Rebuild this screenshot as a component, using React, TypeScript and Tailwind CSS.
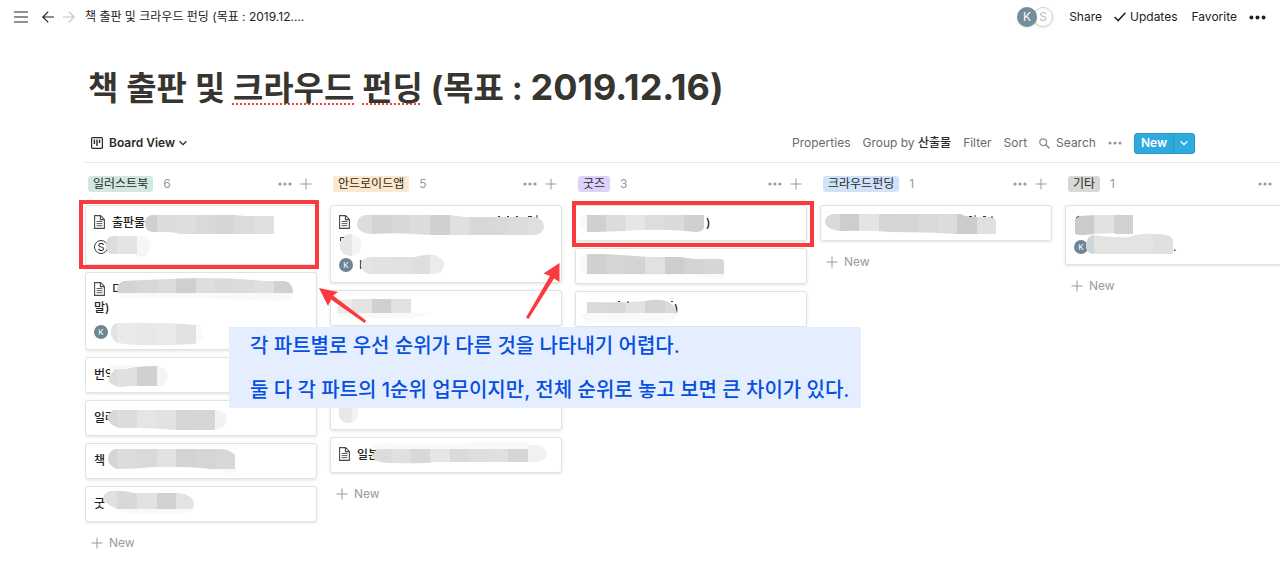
import { useId } from "react";
import type { ReactNode } from "react";

interface Smudge {
  d: string;
  // start x and fill of each tile, a tile runs until the next one
  tiles: [number, string][];
  halo?: string;
  // bits of lettering that stick out from under the smudge
  marks?: string;
}

interface BoardCard {
  title: string;
  titleClass?: string;
  page?: boolean;
  person?: "K" | "S";
  personLabel?: string;
  smudges: Smudge[];
}

interface BoardColumn {
  name: string;
  count: number;
  tag: string;
  cards: BoardCard[];
  hideNew?: boolean;
}

const columns: BoardColumn[] = [
  {
    name: "일러스트북",
    count: 6,
    tag: "bg-[#d0e8df]",
    cards: [
      {
        title: "출판물",
        page: true,
        person: "S",
        smudges: [
          {
            d: "M68 10H150L160 11H189V29H95Q90 27 80 27H68Q60 26 60 19Q60 10 68 10Z",
            tiles: [[60, "#d0d0ce"], [72, "#dcdcda"], [91, "#dededd"], [111, "#d9d9d8"], [130, "#d6d6d5"], [149, "#dcdcdb"], [169, "#dfdfde"]],
          },
          {
            d: "M28 31H50Q66 31 65 42Q64 52 55 52L50 49H28Q21 49 21 40Q21 31 28 31Z",
            tiles: [[21, "#dcdcdb"], [32, "#e4e4e3"], [52, "#f6f6f6"]],
          },
        ],
      },
      {
        title: "디\n말)",
        page: true,
        person: "K",
        smudges: [
          {
            d: "M38 9Q80 7 115 6Q150 6 180 9L200 9Q208 11 208 21H33Q30 14 38 9Z",
            tiles: [[31, "#d3d3d1"], [52, "#d7d7d6"], [72, "#dbdbda"], [91, "#cfcfce"], [111, "#dededd"], [130, "#dadada"], [149, "#dcdcdb"], [169, "#dfdfde"], [189, "#d0d0cf"]],
            halo: "M32 21H208Q206 29 195 29Q150 27 100 26H50Q36 27 32 21Z",
          },
          {
            d: "M32 51Q80 50 111 53H114Q120 58 118 66Q114 72 108 72Q60 75 32 71Q26 66 26 61Q26 52 32 51Z",
            tiles: [[26, "#dfe3e6"], [32, "#eaeaea"], [52, "#e8e8e7"], [72, "#eaeae9"], [91, "#e2e2e1"], [111, "#fafafa"]],
          },
        ],
      },
      {
        title: "번역",
        smudges: [
          {
            d: "M30 12Q40 13 50 10Q60 9 72 9Q83 11 83 19Q82 29 72 29H45L35 30Q22 28 24 20Z",
            tiles: [[22, "#dcdcdb"], [32, "#e0e0df"], [52, "#d0d0cf"], [72, "#f3f3f2"]],
            halo: "M25 8H50V20H25Z",
          },
        ],
      },
      {
        title: "일러",
        smudges: [
          {
            d: "M28 10H132Q142 12 142 20Q140 29 128 30H90Q70 28 50 28H34Q22 24 22 16Z",
            tiles: [[22, "#d8d8d7"], [32, "#dcdcdb"], [52, "#e5e5e4"], [72, "#e2e2e1"], [91, "#d5d5d4"], [111, "#d6d6d5"], [130, "#f2f2f2"]],
          },
        ],
      },
      {
        title: "책",
        smudges: [
          {
            d: "M30 6H138Q145 7 150 12V26H125Q100 23 70 24Q50 26 32 26Q22 22 23 15Q24 8 30 6Z",
            tiles: [[22, "#d5d5d4"], [32, "#dcdcdb"], [52, "#d9d9d8"], [72, "#e2e2e1"], [91, "#d3d3d2"], [111, "#d5d5d4"], [130, "#d8d8d7"]],
            halo: "M128 26H153Q150 31 142 30Z",
          },
        ],
      },
      {
        title: "굿",
        smudges: [
          {
            d: "M26 5Q36 4 50 7H95Q108 9 109 18L108 23H32Q20 18 18 12Q20 5 26 5Z",
            tiles: [[18, "#e0e0df"], [32, "#d8d8d7"], [52, "#e2e2e1"], [72, "#d1d1d0"], [91, "#e3e3e2"]],
            halo: "M25 22H108Q105 28 90 28H50Z",
          },
        ],
      },
    ],
  },
  {
    name: "안드로이드앱",
    count: 5,
    tag: "bg-[#fbe8cd]",
    cards: [
      {
        title: " \n ",
        page: true,
        person: "K",
        personLabel: "I",
        smudges: [
          {
            d: "M36 10H120L135 12H205Q214 14 214 22Q213 29 205 30H100Q70 27 40 29Q27 27 27 19Q27 11 36 10Z",
            tiles: [[27, "#dddddc"], [42, "#d3d3d2"], [62, "#d8d8d7"], [80, "#dcdcdb"], [100, "#d0d0cf"], [120, "#e0e0df"], [139, "#d8d8d7"], [159, "#d9d9d8"], [178, "#dcdcdb"], [198, "#dfdfde"]],
            marks: "M168 11.5H170M177 11.5H179M186 11.5H188M198 11.5H202M207 10V13",
          },
          {
            d: "M21 29A11 11 0 1 1 20 29Z",
            tiles: [[9, "#e6e6e5"], [22, "#f4f4f4"]],
            marks: "M10.5 36V32.500H14",
          },
          {
            d: "M40 52H85Q95 49 105 50Q115 54 114 61Q112 69 104 69H40Q31 67 31 60Q31 53 40 52Z",
            tiles: [[31, "#e4e4e3"], [42, "#e2e2e1"], [62, "#e1e1e0"], [82, "#dededd"], [100, "#ebebea"]],
          },
        ],
      },
      {
        title: " ",
        smudges: [
          {
            d: "M9 10L22 9H81V23H7Z",
            tiles: [[7, "#ebebea"], [22, "#e3e3e2"], [42, "#d0d0cf"], [61, "#e1e1e0"]],
            halo: "M7 23H102Q92 28 70 28H15Q8 27 7 23Z",
          },
        ],
      },
      { title: " ", smudges: [] },
      {
        title: " \n ",
        smudges: [{ d: "M19 27A10 10 0 1 1 18 27Z", tiles: [[8, "#e8e8e7"], [22, "#f2f2f2"]] }],
      },
      {
        title: "일본",
        page: true,
        smudges: [
          {
            d: "M47 12H198V8H207Q217 10 217 17Q215 24 207 25H105Q95 27 60 26Q42 25 42 18Z",
            tiles: [[42, "#dcdcdb"], [62, "#e0e0df"], [81, "#d8d8d7"], [100, "#e6e6e5"], [120, "#dadad9"], [139, "#dededd"], [159, "#e0e0df"], [178, "#d6d6d5"], [198, "#f1f1f1"]],
            halo: "M50 6Q120 8 150 5H198V13H42Q42 7 50 6Z",
          },
        ],
      },
    ],
  },
  {
    name: "굿즈",
    count: 3,
    tag: "bg-[#dfd2fa]",
    hideNew: true,
    cards: [
      {
        title: ")",
        titleClass: "pl-[122px]",
        smudges: [
          {
            d: "M12 10H129V23Q127 27 120 27Q90 23 50 26L18 27H12Z",
            tiles: [[12, "#d0d0cf"], [31, "#dcdcdb"], [51, "#e6e6e5"], [70, "#dddddc"], [90, "#dadad9"], [109, "#d0d0cf"]],
            halo: "M12 9Q4 11 4 18Q5 25 12 26Z",
          },
        ],
      },
      {
        title: " ",
        smudges: [
          {
            d: "M12 6H30L75 9H105L120 11H147L149 13V26H12Z",
            tiles: [[12, "#d0d0cf"], [31, "#d5d5d4"], [51, "#d3d3d2"], [70, "#e1e1e0"], [90, "#cdcdcc"], [109, "#d3d3d2"], [129, "#d6d6d5"]],
            halo: "M12 5Q4 8 4 15Q5 25 12 26H149V31Q130 30 120 27H12Z",
          },
        ],
      },
      {
        title: ")",
        titleClass: "pl-[90px]",
        smudges: [
          {
            d: "M12 11Q50 12 70 10Q85 7 94 11Q101 15 102 22H12Z",
            tiles: [[12, "#dadad9"], [31, "#d8d8d7"], [51, "#e2e2e1"], [70, "#d3d3d2"], [90, "#dadad9"]],
            halo: "M5 22H103Q100 31 88 31H20Q6 31 5 22Z",
            marks: "M43 10.5H45M53 10V12M96 10.5H98",
          },
        ],
      },
    ],
  },
  {
    name: "크라우드펀딩",
    count: 1,
    tag: "bg-[#d0e3fa]",
    cards: [
      {
        title: " ",
        smudges: [
          {
            d: "M14 9H140Q146 12 155 12H170Q176 12 176 17V29H135Q110 27 70 27Q50 25 20 26Q5 24 5 16Q6 10 14 9Z",
            tiles: [[5, "#dadad9"], [20, "#cdcdcc"], [39, "#e4e4e3"], [59, "#d5d5d4"], [78, "#d6d6d5"], [98, "#d9d9d8"], [118, "#dcdcdb"], [137, "#cccccb"], [157, "#e0e0df"]],
            marks: "M149 11.5H152M155 10V12M163 11.5H166M172 11V13",
          },
        ],
      },
    ],
  },
  {
    name: "기타",
    count: 1,
    tag: "bg-[#d8d8d6]",
    cards: [
      {
        title: " ",
        person: "K",
        personLabel: ".",
        smudges: [
          {
            d: "M14 11L30 10H68V29H52L48 28L30 29Q14 31 10 29V14Z",
            tiles: [[10, "#cbcbca"], [29, "#e2e2e1"], [49, "#d1d1d0"]],
            marks: "M11 13L14 11",
          },
          {
            d: "M28 30Q50 33 65 32Q75 28 90 29Q108 29 108 36V49H28Q20 48 21 39Q22 31 28 30Z",
            tiles: [[20, "#cdd6dd"], [29, "#e3e3e2"], [68, "#e4e4e3"], [88, "#e0e0df"]],
          },
        ],
      },
    ],
  },
];

function Dots({ className }: { className: string }) {
  return (
    <svg viewBox="0 0 14 4" fill="currentColor" className={className}>
      <circle cx="2" cy="2" r="1.6" />
      <circle cx="7" cy="2" r="1.6" />
      <circle cx="12" cy="2" r="1.6" />
    </svg>
  );
}

function Plus() {
  return (
    <svg viewBox="0 0 12 12" stroke="currentColor" className="size-3 shrink-0">
      <path d="M6 0.5V11.5M0.5 6H11.5" />
    </svg>
  );
}

function Chevron({ className }: { className: string }) {
  return (
    <svg viewBox="0 0 8 6" fill="none" stroke="currentColor" strokeWidth="1.3" className={className}>
      <path d="M0.6 1.2L4 4.6L7.4 1.2" />
    </svg>
  );
}

function PageIcon() {
  return (
    <svg viewBox="0 0 11 14" fill="none" stroke="#4b4a46" className="mr-[7px] inline-block h-3.5 w-[11px] align-[-2px]">
      <path d="M0.6 0.6H6.6L10.4 4.4V13.4H0.6ZM6.4 0.8V4.6H10.2" strokeWidth="1.1" />
      <path d="M2.6 6.5H8.4M2.6 8.6H8.4M2.6 10.7H8.4" strokeWidth="0.9" />
    </svg>
  );
}

function Smudges({ items }: { items: Smudge[] }) {
  const id = useId();
  return (
    <svg aria-hidden="true" className="pointer-events-none absolute -top-px -left-px size-full overflow-visible">
      {items.map((s, i) => (
        <g key={i}>
          {s.halo && <path d={s.halo} fill="#f9f9f9" />}
          <clipPath id={`${id}-${i}`}>
            <path d={s.d} />
          </clipPath>
          <g clipPath={`url(#${id}-${i})`}>
            {s.tiles.map(([x, fill], n) => (
              <rect key={x} x={x} y="0" width={(s.tiles[n + 1]?.[0] ?? x + 24) - x} height="80" fill={fill} />
            ))}
          </g>
          {s.marks && <path d={s.marks} fill="none" stroke="#3a3936" />}
        </g>
      ))}
    </svg>
  );
}

function Card({ card }: { card: BoardCard }) {
  return (
    <article className="relative rounded-[3px] border border-[#e2e2e1] bg-white px-2 py-2 shadow-[0_1px_3px_rgba(15,15,15,0.12)]">
      <h3 className={`text-xs leading-[18px] font-medium ${card.titleClass ?? ""}`}>
        {card.page && <PageIcon />}
        {card.title.split("\n").map((line, i) => (
          <span key={i}>
            {i > 0 && <br />}
            {line.trim() || "\u00a0"}
          </span>
        ))}
      </h3>
      {card.person && (
        <div className="mt-2 mb-0.5 flex h-3.5 items-center gap-1.5">
          {card.person === "K" ? (
            <span className="flex size-3.5 items-center justify-center rounded-full bg-[#6c8694] text-[8px] text-white">K</span>
          ) : (
            <span className="flex size-3.5 items-center justify-center rounded-full border border-[#37352f] text-[11px] leading-none">S</span>
          )}
          {card.personLabel && (
            <span className={`text-xs ${card.personLabel === "." ? "pl-[79px]" : ""}`}>{card.personLabel}</span>
          )}
        </div>
      )}
      <Smudges items={card.smudges} />
    </article>
  );
}

function Column({ column }: { column: BoardColumn }) {
  return (
    <section className="w-[232px] shrink-0">
      <header className="flex h-[42px] items-center pr-[5px] pl-[3px] text-[#9b9a97]">
        <h2 className={`flex h-4 items-center rounded-[3px] px-[5px] text-xs text-[#2b2a27] ${column.tag}`}>{column.name}</h2>
        <span className="ml-2.5 text-xs">{column.count}</span>
        <button aria-label="Column options" className="ml-auto">
          <Dots className="h-1 w-3.5" />
        </button>
        <button aria-label="Add card" className="ml-2">
          <Plus />
        </button>
      </header>
      <div className="flex flex-col gap-[7px]">
        {column.cards.map((card, i) => (
          <Card key={i} card={card} />
        ))}
      </div>
      {!column.hideNew && (
        <button className="mt-3 flex h-[18px] items-center gap-1.5 pl-1.5 text-xs text-[#9b9a97]">
          <Plus />
          New
        </button>
      )}
    </section>
  );
}

function Misspelled({ children }: { children: ReactNode }) {
  return (
    <span className="underline decoration-[#e8463c] decoration-dotted decoration-2 underline-offset-[3px]">{children}</span>
  );
}

function TopBar() {
  return (
    <header className="flex h-[34px] items-center px-3.5 text-xs text-[#22211e]">
      <button aria-label="Menu">
        <svg viewBox="0 0 14 12" stroke="currentColor" strokeWidth="1.2" className="h-3 w-3.5">
          <path d="M0 1H14M0 6H14M0 11H14" />
        </svg>
      </button>
      <button aria-label="Back" className="ml-3.5">
        <svg viewBox="0 0 12 12" fill="none" stroke="currentColor" strokeWidth="1.2" className="size-3">
          <path d="M12 6H0.8M6.2 0.6L0.8 6L6.2 11.4" />
        </svg>
      </button>
      <button aria-label="Forward" className="ml-[9px] text-[#c4c4c2]">
        <svg viewBox="0 0 12 12" fill="none" stroke="currentColor" strokeWidth="1.2" className="size-3">
          <path d="M0 6H11.2M5.8 0.6L11.2 6L5.8 11.4" />
        </svg>
      </button>
      <a href="#" className="ml-2.5">책 출판 및 크라우드 펀딩 (목표 : 2019.12....</a>

      <div className="ml-auto flex items-center">
        <span className="z-10 flex size-5 items-center justify-center rounded-full bg-[#738d9b] text-xs text-white shadow-sm">K</span>
        <span className="-ml-1 flex size-5 items-center justify-center rounded-full border border-[#cfcfcd] text-xs text-[#bdbdbb] shadow-sm">S</span>
        <button className="ml-4">Share</button>
        <button className="ml-3 flex items-center gap-1">
          <svg viewBox="0 0 12 10" fill="none" stroke="currentColor" strokeWidth="1.5" className="h-2.5 w-3">
            <path d="M0.6 5L4.2 8.6L11.4 0.8" />
          </svg>
          Updates
        </button>
        <button className="ml-3.5">Favorite</button>
        <button aria-label="More" className="ml-3">
          <Dots className="h-[5px] w-[17px]" />
        </button>
      </div>
    </header>
  );
}

function Toolbar() {
  return (
    <div className="flex h-[22px] items-center pr-[85px] text-xs text-[#6b6a66]">
      <button className="flex items-center pl-1.5 font-semibold text-[#2b2a27]">
        <svg viewBox="0 0 12 12" fill="none" stroke="currentColor" className="mr-1.5 size-3">
          <rect x="0.6" y="0.6" width="10.8" height="10.8" rx="1" strokeWidth="1.2" />
          <path d="M3.4 2.6V7M6 2.6V9M8.6 2.6V6" strokeWidth="1.4" />
        </svg>
        Board View
        <Chevron className="ml-1 h-1.5 w-2" />
      </button>
      <div className="ml-auto flex items-center gap-3">
        <button>Properties</button>
        <button>
          Group by <span className="font-medium text-[#2b2a27]">산출물</span>
        </button>
        <button>Filter</button>
        <button>Sort</button>
        <button className="flex items-center gap-1.5">
          <svg viewBox="0 0 11 11" fill="none" stroke="#91908d" strokeWidth="1.3" className="size-[11px]">
            <circle cx="4.2" cy="4.2" r="3.4" />
            <path d="M6.8 6.8L10.4 10.4" strokeWidth="1.6" />
          </svg>
          Search
        </button>
        <button aria-label="View options" className="text-[#9b9a97]">
          <Dots className="h-1 w-3.5" />
        </button>
        <div className="flex h-[21px] rounded-[3px] border border-[#2596c8] bg-[#2eaadc] font-semibold text-white">
          <button className="px-1.5">New</button>
          <button aria-label="New options" className="border-l border-[#2596c8] px-1.5">
            <Chevron className="h-1.5 w-2" />
          </button>
        </div>
      </div>
    </div>
  );
}

// Red frames, arrows and the note that sit on top of the board
function Annotations() {
  return (
    <div className="pointer-events-none absolute inset-0">
      <svg className="absolute inset-0 size-full" fill="none" stroke="#fa3a3e" strokeWidth="4">
        <rect x="81" y="202" width="236" height="65" />
        <rect x="574" y="203" width="238" height="42" />
        <g fill="#fa3a3e" stroke="none">
          <path d="M319 288L338 292L333 295.500L366 320.500L364.500 323L331 299.500L328 306Z" />
          <path d="M559.500 263L559.500 282L554 278.500L528.500 319L526 317.500L550 276L543.500 273.500Z" />
        </g>
      </svg>
      <p className="absolute top-[327px] left-[229px] flex flex-col gap-[9px] bg-[#e5eeff] pt-0.5 pr-3 pl-[21px] text-xl leading-[35px] font-medium whitespace-nowrap text-[#0550e0]">
        <span>각 파트별로 우선 순위가 다른 것을 나타내기 어렵다.</span>
        <span>둘 다 각 파트의 1순위 업무이지만, 전체 순위로 놓고 보면 큰 차이가 있다.</span>
      </p>
    </div>
  );
}

export default function App() {
  return (
    <div className="relative min-h-screen overflow-hidden bg-white font-['Inter','Noto_Sans_CJK_KR',sans-serif] text-[#22211e]">
      <TopBar />
      <main className="pl-[85px]">
        <h1 className="mt-[29px] mb-5 pl-[3px] text-[33px] leading-[48px] font-bold text-[#37352f]">
          책 출판 및 <Misspelled>크라우드</Misspelled> <Misspelled>펀딩</Misspelled> (목표 :{" "}
          <span className="text-4xl leading-[48px]">2019.12.16)</span>
        </h1>
        <Toolbar />
        <div className="mt-2 flex gap-[13px] overflow-x-clip border-t border-[#e6e6e5]">
          {columns.map((column) => (
            <Column key={column.name} column={column} />
          ))}
        </div>
      </main>
      <Annotations />
    </div>
  );
}
